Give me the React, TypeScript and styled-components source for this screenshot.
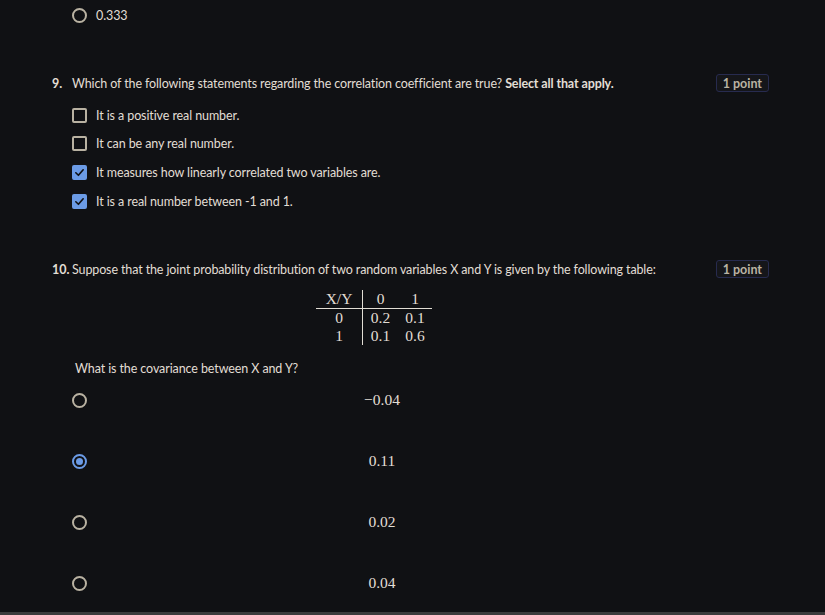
import React from "react";
import styled, { createGlobalStyle } from "styled-components";

const Global = createGlobalStyle`
  html, body { margin: 0; padding: 0; background: #101114; }
  body { font-family: "Lato", "Open Sans", sans-serif; color: #e2ded5; }
`;

const Page = styled.div`
  width: 825px;
  height: 615px;
  background: #101114;
  display: flex;
  flex-direction: column;
  overflow: hidden;
  box-sizing: border-box;
  border-bottom: 3px solid #3b3b3c;
`;

const Row = styled.div<{ $h: number }>`
  display: flex;
  align-items: center;
  height: ${(p) => p.$h}px;
  padding-left: 72px;
  flex-shrink: 0;
`;

const Spacer = styled.div<{ $h: number }>`
  height: ${(p) => p.$h}px;
  flex-shrink: 0;
`;

const RadioCircle = styled.span<{ $on?: boolean }>`
  box-sizing: border-box;
  width: 15px;
  height: 15px;
  border-radius: 50%;
  border: 2px solid ${(p) => (p.$on ? "#6b9be6" : "#b9b2a2")};
  display: inline-flex;
  align-items: center;
  justify-content: center;
  flex-shrink: 0;
  &::after {
    content: "";
    display: ${(p) => (p.$on ? "block" : "none")};
    width: 7px;
    height: 7px;
    border-radius: 50%;
    background: #6b9be6;
  }
`;

const CheckBox = styled.span<{ $on?: boolean }>`
  box-sizing: border-box;
  width: 15px;
  height: 15px;
  border-radius: 2px;
  border: 2px solid ${(p) => (p.$on ? "#6b9be6" : "#b9b2a2")};
  background: ${(p) => (p.$on ? "#6b9be6" : "transparent")};
  display: inline-flex;
  align-items: center;
  justify-content: center;
  flex-shrink: 0;
`;

const OptText = styled.span`
  margin-left: 9px;
  font-size: 12.5px;
  color: #e2ded5;
  letter-spacing: -0.1px;
`;

const QuestionRow = styled.div<{ $h: number }>`
  display: flex;
  align-items: center;
  height: ${(p) => p.$h}px;
  padding-left: 52px;
  padding-right: 56px;
  flex-shrink: 0;
`;

const QNum = styled.span`
  width: 20px;
  font-weight: 700;
  font-size: 12.5px;
  color: #e2ded5;
  flex-shrink: 0;
`;

const QText = styled.span`
  flex: 1;
  font-size: 12.5px;
  letter-spacing: -0.12px;
  color: #e2ded5;
  b { font-weight: 700; }
`;

const Badge = styled.span`
  box-sizing: border-box;
  height: 18px;
  display: inline-flex;
  align-items: center;
  border: 1px solid #272b4f;
  border-radius: 3px;
  padding: 0 6px;
  font-size: 12.5px;
  font-weight: 700;
  color: #bab3a3;
  background: #15161a;
`;

const TableWrap = styled.div`
  display: flex;
  padding-left: 316px;
  flex-shrink: 0;
`;

const MathGrid = styled.div`
  display: grid;
  grid-template-columns: 46px 36px 34px;
  grid-template-rows: 19px 18px 18px;
  font-family: "Liberation Serif", "DejaVu Serif", serif;
  font-size: 15.5px;
  color: #e2ded5;
`;

const Cell = styled.div<{ $left?: boolean; $bottom?: boolean }>`
  box-sizing: border-box;
  display: flex;
  align-items: center;
  justify-content: center;
  border-left: ${(p) => (p.$left ? "1px solid #e2ded5" : "none")};
  border-bottom: ${(p) => (p.$bottom ? "1px solid #e2ded5" : "none")};
`;

const Prompt = styled.div`
  padding-left: 75px;
  font-size: 12.5px;
  letter-spacing: -0.1px;
  color: #e2ded5;
  height: 20px;
  display: flex;
  align-items: center;
  flex-shrink: 0;
`;

const RadioList = styled.div`
  display: flex;
  flex-direction: column;
  gap: 41px;
`;

const MathValue = styled.span`
  width: 590px;
  text-align: center;
  font-family: "Liberation Serif", "DejaVu Serif", serif;
  font-size: 15.5px;
  color: #e2ded5;
`;

const Check = () => (
  <svg width="11" height="11" viewBox="0 0 12 12">
    <path d="M2 6.3 L4.8 9 L10 3" stroke="#101114" strokeWidth="1.8" fill="none" strokeLinecap="round" strokeLinejoin="round" />
  </svg>
);

const checks = [
  { t: "It is a positive real number.", on: false },
  { t: "It can be any real number.", on: false },
  { t: "It measures how linearly correlated two variables are.", on: true },
  { t: "It is a real number between -1 and 1.", on: true },
];

const radios = [
  { t: "\u22120.04", on: false },
  { t: "0.11", on: true },
  { t: "0.02", on: false },
  { t: "0.04", on: false },
];

const table = [
  ["X/Y", "0", "1"],
  ["0", "0.2", "0.1"],
  ["1", "0.1", "0.6"],
];

export default function App() {
  return (
    <>
      <Global />
      <Page>
        <Spacer $h={5} />
        <Row $h={20}>
          <RadioCircle />
          <OptText>0.333</OptText>
        </Row>
        <Spacer $h={48} />
        <QuestionRow $h={20}>
          <QNum>9.</QNum>
          <QText>
            Which of the following statements regarding the correlation coefficient are true? <b>Select all that apply.</b>
          </QText>
          <Badge>1 point</Badge>
        </QuestionRow>
        <Spacer $h={8} />
        {checks.map((c, i) => (
          <Row key={i} $h={i === 0 ? 28 : 29}>
            <CheckBox $on={c.on}>{c.on && <Check />}</CheckBox>
            <OptText>{c.t}</OptText>
          </Row>
        ))}
        <Spacer $h={43} />
        <QuestionRow $h={20}>
          <QNum>10.</QNum>
          <QText>
            Suppose that the joint probability distribution of two random variables X and Y is given by the following table:
          </QText>
          <Badge>1 point</Badge>
        </QuestionRow>
        <Spacer $h={11} />
        <TableWrap>
          <MathGrid>
            {table.map((r, ri) =>
              r.map((v, ci) => (
                <Cell key={`${ri}-${ci}`} $left={ci === 1} $bottom={ri === 0}>
                  {v}
                </Cell>
              ))
            )}
          </MathGrid>
        </TableWrap>
        <Spacer $h={13} />
        <Prompt>What is the covariance between X and Y?</Prompt>
        <Spacer $h={12} />
        <RadioList>
          {radios.map((r, i) => (
            <Row key={i} $h={20}>
              <RadioCircle $on={r.on} />
              <MathValue>{r.t}</MathValue>
            </Row>
          ))}
        </RadioList>
      </Page>
    </>
  );
}
